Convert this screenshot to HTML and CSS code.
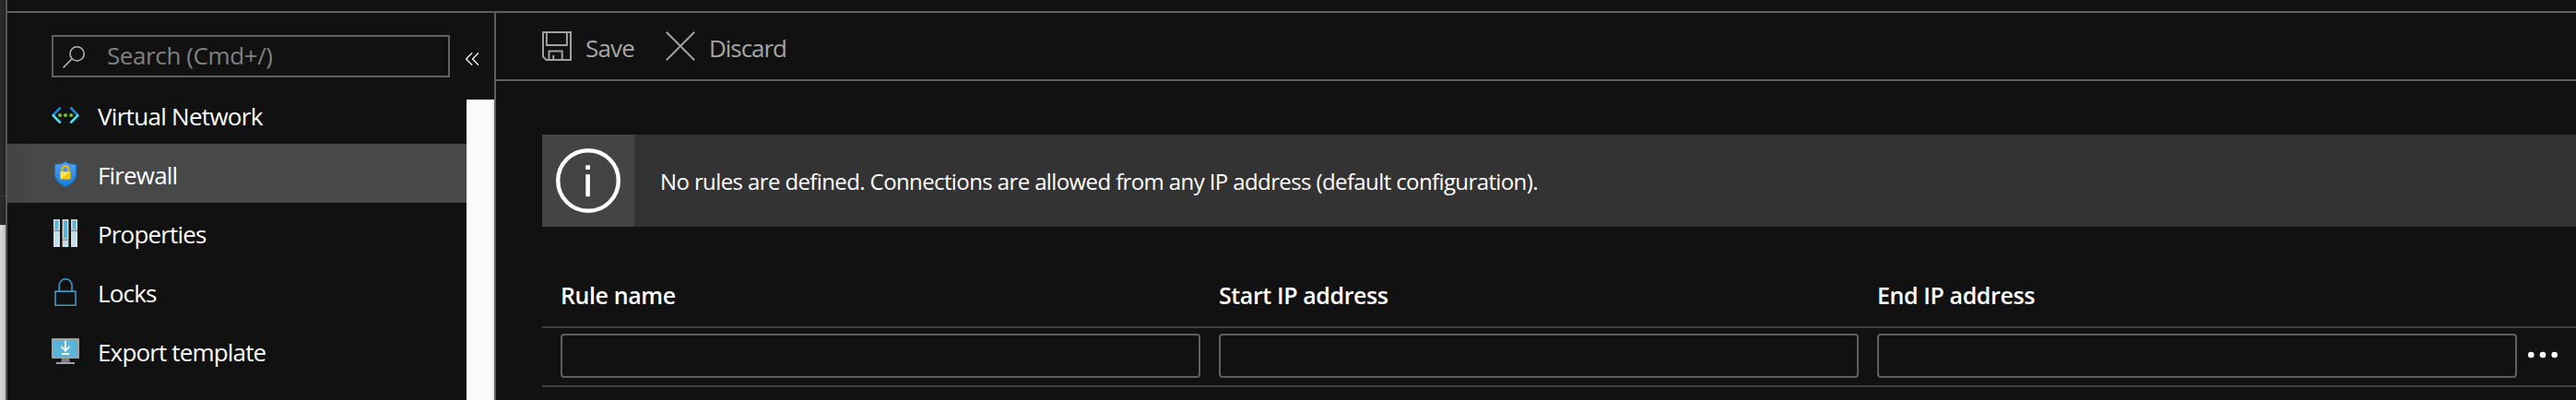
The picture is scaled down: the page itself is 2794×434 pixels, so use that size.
FILE: index.html
```html
<!DOCTYPE html>
<html lang="en">
<head>
<meta charset="utf-8">
<title>Firewall</title>
<link rel="stylesheet" href="styles.css">
</head>
<body>
<div class="portal">
  <div class="edge"><div class="edge-dark"></div><div class="edge-mark"></div><div class="edge-dark edge-dark-end"></div><div class="edge-light"></div></div>
  <div class="blade">
    <aside class="sidebar">
      <div class="search-row">
        <div class="search">
          <svg class="search-icon" width="24" height="24" viewBox="0 0 24 24"><circle cx="15.6" cy="8.4" r="7.6"/><path d="M10.2 13.8 0.6 23.4"/></svg>
          <span class="search-text">Search (Cmd+/)</span>
        </div>
        <svg class="collapse" width="14" height="14" viewBox="0 0 14 14"><path d="M7.2 0.3 0.6 7l6.6 6.7M14 0.3 7.6 7l6.4 6.7"/></svg>
      </div>
      <div class="menu-area">
        <nav class="menu">
          <a class="item">
            <svg class="icon" width="30" height="30" viewBox="0 0 30 30" fill="none" stroke-width="2.6"><path d="M9.6 6.6 1.2 15.4" stroke="#1b8be0"/><path d="M1 14.6l8.6 8.8" stroke="#4fe4fb"/><path d="M20.4 6.6l8.4 8.8" stroke="#1b8be0"/><path d="M29 14.6l-8.6 8.8" stroke="#4fe4fb"/><g fill="#78c229"><circle cx="9" cy="15" r="2"/><circle cx="15" cy="15" r="2"/><circle cx="21.2" cy="15" r="2"/></g></svg>
            <span class="label l-vnet">Virtual Network</span>
          </a>
          <a class="item selected">
            <svg class="icon" width="30" height="30" viewBox="0 0 30 30"><defs><linearGradient id="sh" x1="0" y1="0" x2="0" y2="1"><stop offset="0" stop-color="#5ea0ef"/><stop offset="1" stop-color="#0f7fe0"/></linearGradient><linearGradient id="lk" x1="0" y1="0" x2="1" y2="1"><stop offset=".5" stop-color="#ffe452"/><stop offset=".5" stop-color="#ffc400"/></linearGradient></defs><path d="M15 1.4c3 2.4 6.500 2.700 11.500 3v9.600c0 7-4.500 11-11.500 14.500C8 25 3.500 21 3.500 14V4.400c5-.3 8.500-.6 11.500-3z" fill="url(#sh)" stroke="#1273cf"/><path d="M11.400 12.500V10a3.500 3.700 0 0 1 7 0v2.500" fill="none" stroke="#ffb900" stroke-width="1.900"/><rect x="9.400" y="12.200" width="11.200" height="8.200" rx=".6" fill="url(#lk)"/></svg>
            <span class="label">Firewall</span>
          </a>
          <a class="item">
            <svg class="icon" width="30" height="30" viewBox="0 0 30 30"><g fill="#dedede"><path d="M2 0h7v30H2zM11.600 0h6.800v30h-6.800zM21 0h7v30h-7z"/></g><g fill="#58b4d9"><path d="M3.400 1.200h4v9.600h-4zM13 1.200h4v19.400h-4zM22.600 1.200h4v9.600h-4z"/></g><g fill="#b9e0f0"><path d="M3.400 13h4v15.800h-4zM13 23h4v5.800h-4zM22.600 13h4v15.800h-4z"/></g><g fill="#8d8d8d"><path d="M1.800 11.500H9v1.400H1.800zM11.400 21.600h7.200V23h-7.200zM20.800 11.500H28v1.400h-7.200z"/></g></svg>
            <span class="label">Properties</span>
          </a>
          <a class="item">
            <svg class="icon" width="30" height="30" viewBox="0 0 30 30" fill="none" stroke="#3999c6" stroke-width="1.600"><path d="M4 14.100h22v15.100H4zM8.200 14V7.600a6.900 6.900 0 0 1 13.800 0V14"/></svg>
            <span class="label">Locks</span>
          </a>
          <a class="item">
            <svg class="icon" width="30" height="30" viewBox="0 0 30 30"><path d="M11 22h8l.8 5h-9.600z" fill="#7a7a7a"/><rect x="0" y="1" width="30" height="22" rx="1" fill="#a0a1a2"/><path d="M2 3h26v18H2z" fill="#59b4d9"/><path d="M5 27h20v2H5z" fill="#a0a1a2"/><path d="M15 3.800v10.400M10.400 9.800l4.600 4.800 4.600-4.800" fill="none" stroke="#fff" stroke-width="1.800"/><path d="M11 17h8v2h-8z" fill="#fff"/></svg>
            <span class="label">Export template</span>
          </a>
        </nav>
        <div class="scrollbar"></div>
      </div>
    </aside>
    <main class="content">
      <div class="toolbar">
        <svg class="tool-icon" width="32" height="32" viewBox="0 0 32 32"><path d="M1 1h30v30H4.600L1 27.600zM4.900 1v14h22V1M7.500 31V21.500h14.200V31M12.300 31v-5.200" /></svg>
        <span class="tool-label l-save">Save</span>
        <svg class="tool-icon" width="32" height="32" viewBox="0 0 32 32"><path d="M.8.8l30.400 30.400M31.200.8.8 31.200"/></svg>
        <span class="tool-label">Discard</span>
      </div>
      <div class="body">
        <div class="notice">
          <div class="notice-icon"><svg width="70" height="70" viewBox="0 0 70 70"><circle cx="35" cy="35" r="32.800" fill="none" stroke="#fff" stroke-width="4.400"/><path d="M32.300 18.300h4.600v4.800h-4.600zM32.300 28.300h4.600v24h-4.600z" fill="#fff"/></svg></div>
          <span class="notice-text">No rules are defined. Connections are allowed from any IP address (default configuration).</span>
        </div>
        <div class="row heads">
          <span class="head">Rule name</span>
          <span class="head">Start IP address</span>
          <span class="head">End IP address</span>
        </div>
        <div class="row fields">
          <div class="field"></div><div class="field"></div><div class="field"></div>
          <svg class="more" width="34" height="8" viewBox="0 0 34 8" fill="#fff"><circle cx="4.300" cy="4" r="3.300"/><circle cx="17" cy="4" r="3.300"/><circle cx="29.700" cy="4" r="3.300"/></svg>
        </div>
      </div>
    </main>
  </div>
</div>
</body>
</html>
```
FILE: styles.css
```css
* { box-sizing: border-box; }
body {
  margin: 0;
  background: #111;
  color: #fff;
  font: 26px/34px "Open Sans", "Noto Sans", sans-serif;
  overflow: hidden;
}
svg { display: block; flex: none; }
span { white-space: nowrap; }
.portal { display: flex; height: 434px; }
.edge {
  width: 8px;
  flex: none;
  display: flex;
  flex-direction: column;
  border-right: 2px solid #555;
}
.edge-dark { height: 212px; background: linear-gradient(90deg, #2d2c2b, #252423); }
.edge-mark { height: 2px; background: #343332; }
.edge-dark-end { height: 30px; }
.edge-light { flex: 1; background: linear-gradient(90deg, #dadada, #c4c4c4); }
.blade {
  flex: 1;
  min-width: 0;
  display: flex;
  margin-top: 12px;
  border-top: 2px solid #5f5f5f;
}
.sidebar {
  width: 530px;
  flex: none;
  display: flex;
  flex-direction: column;
  border-right: 2px solid #5f5f5f;
}
.search-row { display: flex; height: 94px; padding: 24px 0 0 48px; }
.search {
  width: 432px;
  height: 46px;
  display: flex;
  align-items: center;
  gap: 24px;
  padding-left: 10px;
  border: 2px solid #5f5f5f;
}
.search-icon { fill: none; stroke: #b4b4b4; stroke-width: 1.6; margin-top: 2px; }
.search-text { color: #808080; letter-spacing: -0.4px; padding-bottom: 2px; }
.collapse { fill: none; stroke: #fff; stroke-width: 1.3; margin: 19px 0 0 17px; }
.menu-area { flex: 1; display: flex; min-height: 0; }
.menu { flex: 1; margin-top: -16px; }
.item { display: flex; align-items: center; height: 64px; gap: 20px; padding: 2px 0 0 48px; }
.selected { background: linear-gradient(90deg, #434343, #484848 32px); }
.label { padding-top: 2px; letter-spacing: -0.84px; font-weight: 500; }
.l-vnet { letter-spacing: -0.7px; }
.scrollbar { width: 30px; background: #fafafa; border-right: 2px solid #ececec; }
.content { flex: 1; min-width: 0; }
.toolbar {
  height: 74px;
  display: flex;
  align-items: center;
  padding: 0 0 2px 50px;
  border-bottom: 2px solid #5f5f5f;
  color: #a5a5a5;
}
.tool-icon { fill: none; stroke: #a0a0a0; stroke-width: 2; margin-top: 2px; }
.tool-label { padding-top: 6px; margin-left: 15px; letter-spacing: -1.05px; }
.l-save { width: 87px; letter-spacing: -0.8px; }
.body { padding: 58px 0 0 50px; }
.notice { height: 100px; display: flex; align-items: center; background: #333; }
.notice-icon { width: 100px; height: 100px; display: grid; place-items: center; background: #444; }
.notice-text { margin-left: 28px; padding-top: 2px; font-size: 24px; letter-spacing: -0.61px; }
.row { display: grid; grid-template-columns: repeat(3, 694px) 1fr; column-gap: 20px; padding-left: 20px; }
.heads {
  height: 110px;
  padding-top: 57px;
  border-bottom: 2px solid #404040;
  font-size: 25px;
  font-weight: 600;
  letter-spacing: -0.4px;
}
.fields { height: 64px; padding-top: 6px; border-bottom: 2px solid #404040; }
.field { height: 48px; border: 2px solid #5f5f5f; border-radius: 4px; }
.more { margin: 19px 0 0 -9px; }
```
